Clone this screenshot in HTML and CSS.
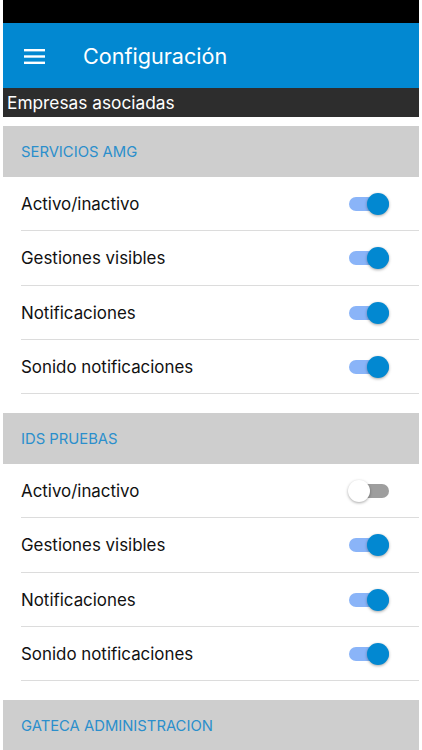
FILE: index.html
```html
<!DOCTYPE html>
<html lang="es">
<head>
<meta charset="utf-8">
<link rel="stylesheet" href="styles.css">
</head>
<body>
<div class="app">
  <div class="statusbar"></div>
  <header class="toolbar">
    <svg class="menu" width="21" height="16" viewBox="0 0 21 16"><rect x="0" y="1" width="21" height="2.4" fill="#fff"/><rect x="0" y="7.3" width="21" height="2.4" fill="#fff"/><rect x="0" y="13.6" width="21" height="2.4" fill="#fff"/></svg>
    <h1 class="title">Configuración</h1>
  </header>
  <div class="subbar">Empresas asociadas</div>

  <section class="group">
    <div class="group-head">SERVICIOS AMG</div>
    <div class="row"><span>Activo/inactivo</span><span class="switch on"></span></div>
    <div class="row"><span>Gestiones visibles</span><span class="switch on"></span></div>
    <div class="row"><span>Notificaciones</span><span class="switch on"></span></div>
    <div class="row"><span>Sonido notificaciones</span><span class="switch on"></span></div>
  </section>

  <section class="group">
    <div class="group-head">IDS PRUEBAS</div>
    <div class="row"><span>Activo/inactivo</span><span class="switch"></span></div>
    <div class="row"><span>Gestiones visibles</span><span class="switch on"></span></div>
    <div class="row"><span>Notificaciones</span><span class="switch on"></span></div>
    <div class="row"><span>Sonido notificaciones</span><span class="switch on"></span></div>
  </section>

  <section class="group">
    <div class="group-head">GATECA ADMINISTRACION</div>
  </section>
</div>
</body>
</html>
```
FILE: styles.css
```css
html, body {
  margin: 0;
  padding: 0;
  background: #fff;
  overflow: hidden;
}
body {
  font-family: Inter, "Liberation Sans", sans-serif;
  color: #111;
}
.app {
  margin: 0 3px;
  height: 750px;
  overflow: hidden;
}
.statusbar {
  height: 23px;
  background: #000;
}
.toolbar {
  height: 65px;
  background: #0288d1;
  display: flex;
  align-items: center;
  padding-left: 21px;
  box-sizing: border-box;
}
.menu {
  display: block;
}
.title {
  margin: 0 0 0 38px;
  font-size: 21.6px;
  font-weight: 400;
  color: #fff;
}
.subbar {
  height: 29px;
  background: #2d2d2d;
  color: #fff;
  font-size: 17.3px;
  display: flex;
  align-items: center;
  padding-left: 4px;
}
.group {
  margin-top: 19px;
}
.group:first-of-type {
  margin-top: 9px;
}
.group-head {
  height: 51px;
  background: #cecece;
  color: #2b8fcc;
  font-size: 14.8px;
  display: flex;
  align-items: center;
  padding-left: 18px;
}
.row {
  height: 54.25px;
  box-sizing: border-box;
  margin-left: 18px;
  padding-right: 30px;
  border-bottom: 1px solid #dcdcdc;
  display: flex;
  align-items: center;
  justify-content: space-between;
  font-size: 16.9px;
  padding-top: 1px;
}
.switch {
  position: relative;
  width: 40px;
  height: 14px;
  border-radius: 7px;
  background: #9e9e9e;
}
.switch::after {
  content: "";
  position: absolute;
  top: -4px;
  left: -1px;
  width: 22px;
  height: 22px;
  border-radius: 50%;
  background: #fff;
  box-shadow: 0 1px 3px rgba(0,0,0,0.35);
}
.switch.on {
  background: #8ab4f8;
}
.switch.on::after {
  left: auto;
  right: 0;
  background: #0288d1;
}
```
